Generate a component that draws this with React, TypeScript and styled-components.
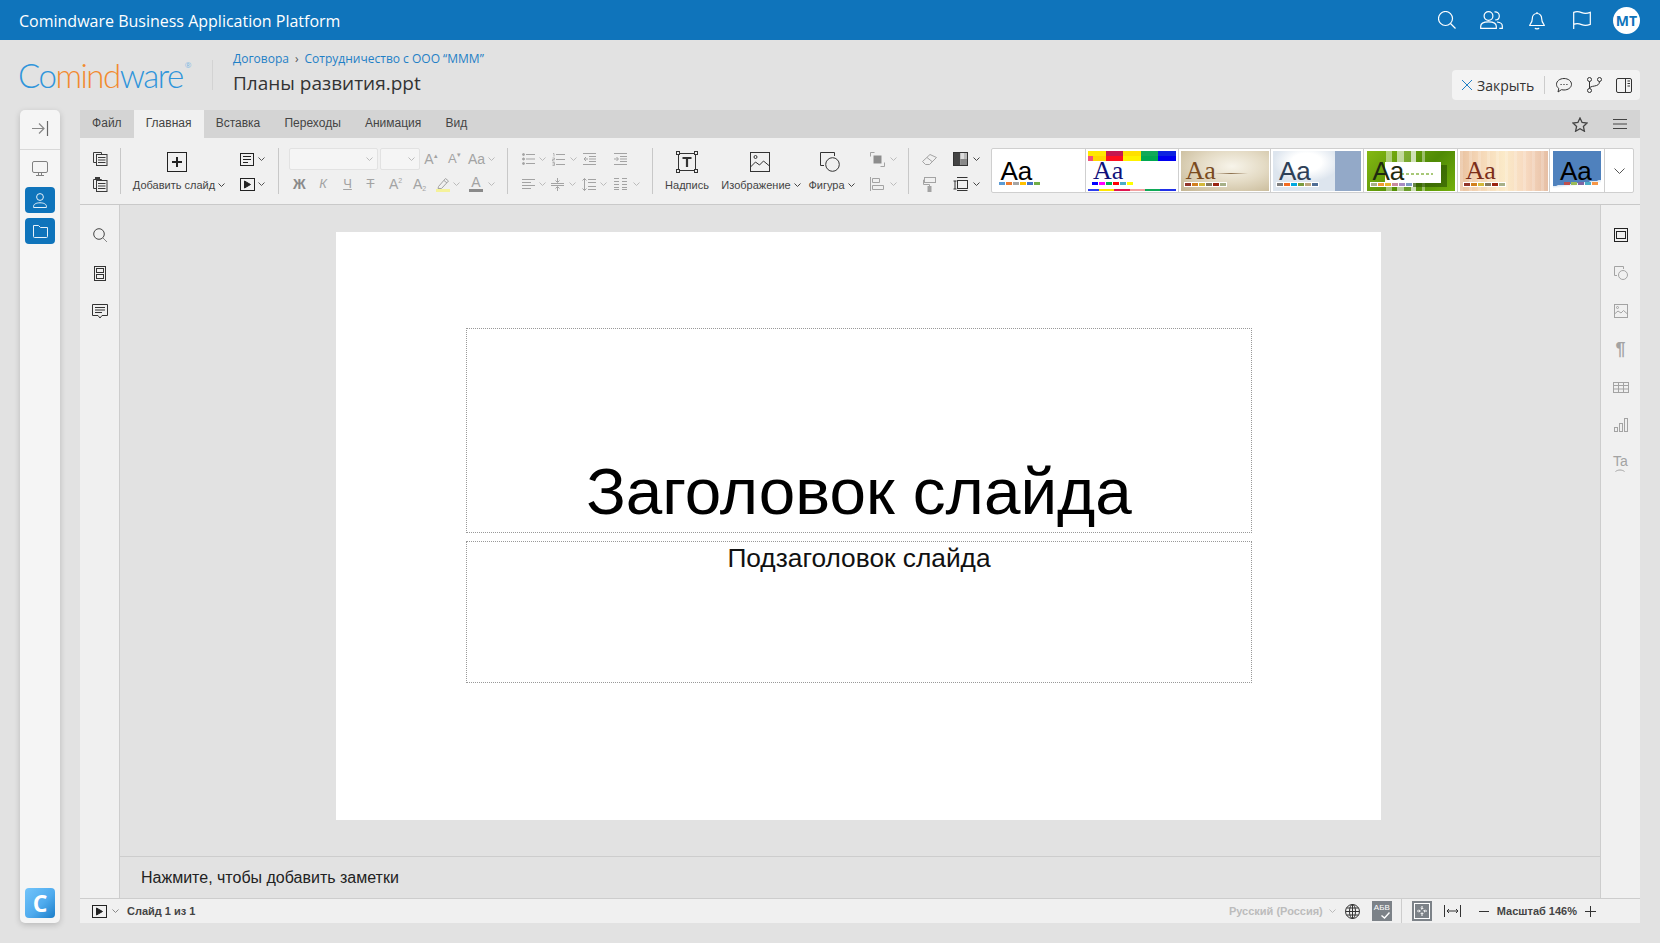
import React from "react";
import styled, {createGlobalStyle} from "styled-components";

const GlobalStyle = createGlobalStyle`
    html, body {margin: 0; background: #e2e2e2; overflow: hidden;}
    * {box-sizing: border-box;}
`;

const Svg = styled.svg<{$c?: string}>`
    display: block;
    flex: none;
    fill: none;
    stroke: ${(p) => p.$c || "#333"};
    stroke-width: 1;
`;

const Ico: React.FC<{w: number; h: number; c?: string; children: React.ReactNode}> = ({w, h, c, children}) => (
    <Svg width={w} height={h} viewBox={`0 0 ${w} ${h}`} $c={c}>
        {children}
    </Svg>
);

const GRAY = "#a3a3a3";
const DARK = "#3a3a3a";

const Chev = ({c = "#888"}: {c?: string}) => (
    <Ico w={7} h={4} c={c}>
        <path d="M.5.5l3 3 3-3" />
    </Ico>
);

const Lines = ({x, ys, w}: {x: number; ys: number[]; w: number}) => (
    <path d={ys.map((y) => `M${x} ${y}h${w}`).join("")} />
);

const CopyIcon = () => (
    <Ico w={15} h={14} c={DARK}>
        <path d="M3.5 10.5h-3v-10h8v2" />
        <rect x="3.5" y="2.5" width="10.5" height="11" />
        <Lines x={5} ys={[5.5, 8, 10.5]} w={7.5} />
    </Ico>
);

const PasteIcon = () => (
    <Ico w={15} h={15} c={DARK}>
        <path d="M3.5 11.5h-3v-9h8v1.5" />
        <rect x="2.5" y="0.5" width="4" height="2" fill={DARK} />
        <rect x="3.5" y="3.5" width="10.5" height="11" />
        <Lines x={5} ys={[6.5, 9, 11.5]} w={7.5} />
    </Ico>
);

const AddBox = () => (
    <Ico w={20} h={20} c="#222">
        <rect x=".5" y=".5" width="19" height="19" />
        <path d="M10 5v10M5 10h10" strokeWidth="2" />
    </Ico>
);

const LayoutIcon = () => (
    <Ico w={14} h={13} c="#222">
        <rect x=".5" y=".5" width="13" height="12" />
        <path d="M3 3.5h8M3 6.5h8M3 9.5h5" />
    </Ico>
);

const PlayIcon = () => (
    <Ico w={15} h={13} c="#222">
        <rect x=".5" y=".5" width="14" height="12" />
        <path d="M4.5 3l6 3.5-6 3.5z" fill="#222" />
    </Ico>
);

const BulletList = () => (
    <Ico w={13} h={12} c={GRAY}>
        <circle cx="1.5" cy="1.5" r="1" fill={GRAY} />
        <circle cx="1.5" cy="6" r="1" fill={GRAY} />
        <circle cx="1.5" cy="10.5" r="1" fill={GRAY} />
        <Lines x={4} ys={[1.5, 6, 10.5]} w={9} />
    </Ico>
);

const NumList = () => (
    <Ico w={13} h={13} c={GRAY}>
        <path d="M1 .5h1v3M.5 5h2v1.5H.5V8h2M.5 9.5h2v3H.5M.5 11h2" strokeWidth=".8" />
        <Lines x={4} ys={[1.5, 6.5, 11.5]} w={9} />
    </Ico>
);

const Outdent = () => (
    <Ico w={13} h={12} c={GRAY}>
        <Lines x={0} ys={[.5, 11.5]} w={13} />
        <Lines x={6} ys={[3.5, 8.5]} w={7} />
        <path d="M5 6H1M3 4L1 6l2 2M6 6h7" />
    </Ico>
);

const Indent = () => (
    <Ico w={13} h={12} c={GRAY}>
        <Lines x={0} ys={[.5, 11.5]} w={13} />
        <Lines x={6} ys={[3.5, 8.5]} w={7} />
        <path d="M0 6h4M2.5 4L4.5 6l-2 2M6 6h7" />
    </Ico>
);

const AlignLeft = () => (
    <Ico w={13} h={11} c={GRAY}>
        <path d="M0 .5h13M0 3.5h9M0 6.5h13M0 9.5h9" />
    </Ico>
);

const VAlign = () => (
    <Ico w={13} h={13} c={GRAY}>
        <path d="M0 5.5h13M0 7.5h13M6.5 0v4M4.5 2.5l2 2 2-2M6.5 13V9M4.5 10.5l2-2 2 2" />
    </Ico>
);

const LineSpacing = () => (
    <Ico w={14} h={13} c={GRAY}>
        <path d="M2.5 .5v12M.5 2.5l2-2 2 2M.5 10.5l2 2 2-2M6 1.5h8M6 4.5h8M6 8.5h8M6 11.5h8" />
    </Ico>
);

const Columns = () => (
    <Ico w={13} h={12} c={GRAY}>
        <path d="M0 .5h5M0 3.5h5M0 6.5h5M0 9.5h5M0 11.5h5M8 .5h5M8 3.5h5M8 6.5h5M8 9.5h5M8 11.5h5" />
    </Ico>
);

const PenIcon = () => (
    <Ico w={14} h={15} c={GRAY}>
        <path d="M2.5 9.5l7-8 3 2.5-7 7.5-3.5 0z" />
        <path d="M8 3.5l3 2.5" />
        <rect x="0" y="12" width="14" height="3" fill="#f5f29a" stroke="none" />
    </Ico>
);

const TextBoxIcon = () => (
    <Ico w={22} h={22} c="#333">
        <path d="M2.5 2.5h17v17h-17z" />
        <g fill="#f0f0f0">
            <rect x=".5" y=".5" width="3" height="3" />
            <rect x="18.5" y=".5" width="3" height="3" />
            <rect x=".5" y="18.5" width="3" height="3" />
            <rect x="18.5" y="18.5" width="3" height="3" />
        </g>
        <path d="M6.5 7h9M11 7v9" strokeWidth="2.2" />
    </Ico>
);

const ImageIcon = () => (
    <Ico w={20} h={20}>
        <rect x=".5" y=".5" width="19" height="19" />
        <circle cx="5.5" cy="5" r="1.5" />
        <path d="M.5 15l5-5 4 3 4-4 6 5" />
    </Ico>
);

const ShapeIcon = () => (
    <Ico w={20} h={20}>
        <path d="M4 13.5H.5V.5h14V4" />
        <circle cx="12.5" cy="12.5" r="6.8" />
    </Ico>
);

const ArrangeIcon = () => (
    <Ico w={15} h={15} c={GRAY}>
        <path d="M4.5 .5H.5v4M10.5 14.5h4v-4" />
        <rect x="4" y="4" width="7" height="7" fill="#8d8d8d" stroke="#8d8d8d" />
    </Ico>
);

const AlignObjects = () => (
    <Ico w={15} h={14} c={GRAY}>
        <path d="M.5 0v14M2.5 1.5h7v4h-7zM2.5 8.5h11v4h-11z" />
    </Ico>
);

const EraserIcon = () => (
    <Ico w={15} h={13} c={GRAY}>
        <path d="M.5 8.5L8 1.5l6.5 3-7 7H3.5z" />
        <path d="M5 4.5l5 4" />
    </Ico>
);

const PaletteIcon = () => (
    <Ico w={15} h={14}>
        <rect x=".5" y=".5" width="14" height="13" fill="#fff" stroke="#333" />
        <rect x="1" y="1" width="6.5" height="12" fill="#444" stroke="none" />
        <rect x="7.5" y="1" width="3.5" height="6" fill="#ddd" stroke="none" />
        <rect x="11" y="1" width="3" height="6" fill="#bbb" stroke="none" />
        <rect x="7.5" y="7" width="6.5" height="6" fill="#888" stroke="none" />
    </Ico>
);

const RollerIcon = () => (
    <Ico w={13} h={15} c={GRAY}>
        <rect x="1.5" y=".5" width="11" height="5" />
        <path d="M1.5 3H.5v4.5h6V10" />
        <rect x="5" y="9.5" width="3" height="5.5" fill={GRAY} />
    </Ico>
);

const SizeIcon = () => (
    <Ico w={15} h={14}>
        <path d="M4 .5h10.5M4 13.5h10.5M.5 4h3M.5 12h3M2 4v8" />
        <rect x="4.5" y="3.5" width="10" height="8" />
    </Ico>
);

const TopSearch = () => (
    <Ico w={18} h={18} c="#fff">
        <circle cx="7.5" cy="7.5" r="7" strokeWidth="1.2" />
        <path d="M12.5 12.5l5 5" strokeWidth="1.2" />
    </Ico>
);

const TopUsers = () => (
    <Ico w={23} h={18} c="#fff">
        <circle cx="8.5" cy="5" r="4.4" strokeWidth="1.2" />
        <path d="M.7 17.4v-2.2c0-3 3-4.4 7.8-4.4s7.8 1.4 7.8 4.4v2.2z" strokeWidth="1.2" />
        <path d="M14.5.9c3-.3 4.8 1.6 4.8 4s-1.8 4-4 4M17 11c3 .3 5.3 1.6 5.3 4v2.4h-3" strokeWidth="1.2" />
    </Ico>
);

const TopBell = () => (
    <Ico w={16} h={19} c="#fff">
        <path d="M8 1v1.5M8 2.500c-3.2 0-4.7 2.3-4.700 5.200 0 4.300-2.600 5.300-2.600 6.800h14.600c0-1.500-2.600-2.500-2.600-6.800 0-2.900-1.500-5.200-4.700-5.200z" strokeWidth="1.2" />
        <path d="M6 17c.4 1.2 3.600 1.2 4 0" strokeWidth="1.2" />
    </Ico>
);

const TopFlag = () => (
    <Ico w={18} h={18} c="#fff">
        <path d="M.7 18V1.400c3-1.400 5-1 8 .2s5 1 8.600-.2v12c-3.600 1.200-5.600 1.400-8.600.2s-5-1.600-8-.2" strokeWidth="1.2" />
    </Ico>
);

const CommentBubble = () => (
    <Ico w={16} h={15}>
        <path d="M8 .5c4.200 0 7.500 2.600 7.500 5.800S12.200 12 8 12c-.9 0-1.800-.1-2.600-.3L2 14l.8-3.500C1.300 9.400.5 8 .5 6.300.5 3.100 3.800.5 8 .5z" />
        <path d="M4.500 6.500h1.200M7.400 6.500h1.200M10.300 6.500h1.200" />
    </Ico>
);

const BranchIcon = () => (
    <Ico w={15} h={16}>
        <circle cx="2.5" cy="2.5" r="2" />
        <circle cx="2.5" cy="13.5" r="2" />
        <circle cx="12.5" cy="2.5" r="2" />
        <path d="M2.500 4.500v7M12.500 4.500c0 3-2 4-5 4.500s-5 1-5 2.500" />
    </Ico>
);

const PanelIcon = () => (
    <Ico w={16} h={15}>
        <rect x=".5" y=".5" width="15" height="14" rx="1.5" />
        <path d="M9.500.5v14M11.500 3H14M11.500 5.500H14M11.500 8H14" />
    </Ico>
);

const StarIcon = () => (
    <Ico w={16} h={15} c="#444">
        <path d="M8 1l2.100 4.500 4.900.6-3.600 3.300 1 4.800L8 11.800l-4.400 2.400 1-4.800L1 6.100l4.900-.6z" strokeWidth="1.3" />
    </Ico>
);

const BurgerIcon = () => (
    <Ico w={14} h={10} c="#444">
        <path d="M0 .5h14M0 5h14M0 9.500h14" />
    </Ico>
);

const CollapseIcon = () => (
    <Ico w={17} h={15} c="#666">
        <path d="M0 7.500h12M7 2.500l5 5-5 5" stroke="#888" strokeWidth="1.2" />
        <path d="M15.500 0v15" strokeWidth="1.2" />
    </Ico>
);

const MonitorIcon = () => (
    <Ico w={16} h={15} c="#808080">
        <rect x=".5" y=".5" width="15" height="11" rx="1.5" />
        <path d="M6.500 11.500v3M9.500 11.500v3M4 14.500h8" />
    </Ico>
);

const UserIcon = () => (
    <Ico w={14} h={15} c="#e8f2fa">
        <circle cx="7" cy="4" r="3.4" />
        <path d="M.6 14.500v-1.300c0-2 2.600-3.400 6.400-3.400s6.400 1.400 6.400 3.400v1.300z" />
    </Ico>
);

const FolderIcon = () => (
    <Ico w={15} h={13} c="#e8f2fa">
        <path d="M.5 11.500V.5h5l2 2h7v9a1 1 0 0 1-1 1h-12a1 1 0 0 1-1-1z" />
    </Ico>
);

const SearchIcon = () => (
    <Ico w={14} h={14} c="#444">
        <circle cx="6" cy="6" r="5.3" />
        <path d="M10 10l4 4" stroke="#888" />
    </Ico>
);

const SlidesIcon = () => (
    <Ico w={12} h={15}>
        <rect x=".5" y=".5" width="11" height="14" />
        <rect x="2.5" y="2.5" width="7" height="4" />
        <rect x="2.5" y="8.5" width="7" height="4" />
    </Ico>
);

const NotesIcon = () => (
    <Ico w={16} h={15}>
        <path d="M.5.5h15v11H10L8 14l-2-2.500H.5z" />
        <path d="M3 3.500h10M3 6h10M3 8.500h7" />
    </Ico>
);

const FrameIcon = () => (
    <Ico w={14} h={14} c="#222">
        <rect x=".5" y=".5" width="13" height="13" />
        <rect x="2.5" y="3.5" width="9" height="7" />
    </Ico>
);

const ShapeSmall = () => (
    <Ico w={14} h={14} c={GRAY}>
        <path d="M3 9.500H.5V.5h9V3" />
        <circle cx="9" cy="9" r="4.5" />
    </Ico>
);

const ImageSmall = () => (
    <Ico w={14} h={14} c={GRAY}>
        <rect x=".5" y=".5" width="13" height="13" />
        <circle cx="3.5" cy="3.5" r="1" />
        <path d="M.5 10L4 7l3 2 2.500-2.500 4 3.500" />
    </Ico>
);

const TableIcon = () => (
    <Ico w={16} h={11} c={GRAY}>
        <rect x=".5" y=".5" width="15" height="10" />
        <path d="M.5 3.500h15M.5 7h15M5.500.5v10M10.500.5v10" />
    </Ico>
);

const ChartIcon = () => (
    <Ico w={14} h={14} c={GRAY}>
        <rect x=".5" y="9.5" width="3" height="4" />
        <rect x="5.5" y="5.5" width="3" height="8" />
        <rect x="10.5" y=".5" width="3" height="13" />
    </Ico>
);

const GlobeIcon = () => (
    <Ico w={15} h={15}>
        <circle cx="7.5" cy="7.5" r="7" />
        <ellipse cx="7.5" cy="7.5" rx="3" ry="7" />
        <path d="M7.500.5v14M1.500 4h12M.5 7.500h14M1.500 11h12" />
    </Ico>
);

const SpellCheck = () => (
    <Ico w={9} h={7} c="#fff">
        <path d="M.5 3.500l3 2.500 5-5.500" strokeWidth="1.4" />
    </Ico>
);

const FitIcon = () => (
    <Ico w={16} h={16} c="#fff">
        <rect x=".5" y=".5" width="15" height="15" />
        <path d="M8 3v3M6.700 5L8 6.300 9.300 5M8 13v-3M6.700 11L8 9.700 9.300 11M3 8h3M5 6.700L6.300 8 5 9.300M13 8h-3M11 6.700L9.700 8l1.300 1.300" />
    </Ico>
);

const WidthIcon = () => (
    <Ico w={17} h={12}>
        <path d="M.5 0v12M16.500 0v12M3 6h11M5 4L3 6l2 2M12 4l2 2-2 2" />
    </Ico>
);

const MinusIcon = () => (
    <Ico w={10} h={3}>
        <path d="M0 1.500h10" />
    </Ico>
);

const PlusIcon = () => (
    <Ico w={11} h={11}>
        <path d="M0 5.500h11M5.500 0v11" />
    </Ico>
);

const Page = styled.div`
    width: 1660px;
    height: 943px;
    display: flex;
    flex-direction: column;
    background: #e2e2e2;
    font-family: "Liberation Sans", Arial, sans-serif;
`;

const TopBar = styled.header`
    height: 40px;
    flex: none;
    display: flex;
    align-items: center;
    padding: 2px 20px 0 19px;
    background: #0f74bb;
    color: #fff;
    font: 16px "Open Sans", sans-serif;
`;

const TopIcons = styled.div`
    margin: -2px 0 0 auto;
    display: flex;
    align-items: center;
`;

const TopSlot = styled.div<{$ml: number}>`
    margin-left: ${(p) => p.$ml}px;
`;

const Avatar = styled.div`
    width: 27px;
    height: 27px;
    margin-left: 22px;
    border-radius: 50%;
    background: #fff;
    color: #0f74bb;
    font: 700 14px/27px "Open Sans", sans-serif;
    text-align: center;
`;

const Header = styled.div`
    height: 70px;
    flex: none;
    display: flex;
    padding: 20px 20px 0 19px;
`;

const Logo = styled.div`
    width: 172px;
    height: 30px;
    margin-left: -1px;
    display: flex;
    align-items: center;
    font: 300 33px/30px "Lato", sans-serif;
    letter-spacing: -1.5px;
    color: #2f95db;
`;

const LogoMid = styled.span`
    color: #f28a2e;
`;

const LogoMark = styled.sup`
    font: 8px/8px "Open Sans", sans-serif;
    letter-spacing: 0;
    color: #7fb9e2;
    align-self: flex-start;
    margin: 1px 0 0 2px;
`;

const HeadDivider = styled.div`
    width: 1px;
    height: 30px;
    margin: 0 20px 0 22px;
    background: #d3d3d3;
`;

const HeadText = styled.div`
    display: flex;
    flex-direction: column;
    margin-top: -11px;
`;

const Crumbs = styled.div`
    display: flex;
    align-items: center;
    height: 18px;
    font: 12px "Open Sans", sans-serif;
    color: #1f80c6;
`;

const CrumbSep = styled.span`
    margin: 0 6px;
    color: #555;
`;

const DocTitle = styled.div`
    margin-top: 3px;
    font: 19px/26px "Open Sans", sans-serif;
    color: #333;
`;

const CloseBar = styled.div`
    margin: 10px 0 0 auto;
    width: 188px;
    height: 30px;
    display: flex;
    align-items: center;
    padding-left: 10px;
    background: #f3f3f3;
    border-radius: 4px;
`;

const CloseLabel = styled.span`
    margin-left: 5px;
    font: 14px "Open Sans", sans-serif;
    color: #333;
`;

const BarDivider = styled.div`
    width: 1px;
    height: 18px;
    margin: 0 11px 0 10px;
    background: #ccc;
`;

const Body = styled.div`
    flex: 1;
    display: flex;
    gap: 20px;
    padding: 0 20px 20px;
    min-height: 0;
`;

const Sidebar = styled.nav`
    width: 40px;
    flex: none;
    display: flex;
    flex-direction: column;
    align-items: center;
    background: #f5f5f5;
    border-radius: 5px;
    box-shadow: 0 2px 6px rgba(0, 0, 0, 0.18);
`;

const SideTop = styled.div`
    width: 100%;
    height: 40px;
    flex: none;
    display: flex;
    align-items: center;
    justify-content: center;
    padding-bottom: 2px;
    margin-bottom: 5px;
    border-bottom: 1px solid #d8d8d8;
`;

const SideItem = styled.div<{$active?: boolean; $mb: number}>`
    width: 30px;
    height: 26px;
    flex: none;
    display: flex;
    align-items: center;
    justify-content: center;
    margin-bottom: ${(p) => p.$mb}px;
    border-radius: 4px;
    background: ${(p) => (p.$active ? "#0f74bb" : "transparent")};
`;

const SideLogo = styled.div`
    margin: auto 0 5px;
    width: 30px;
    height: 30px;
    border-radius: 4px;
    background: linear-gradient(135deg, #72c4fa 0%, #4fabee 55%, #1b7dc8 100%);
    color: #fff;
    font: 700 23px/30px "Open Sans", sans-serif;
    text-align: center;
`;

const Main = styled.main`
    flex: 1;
    min-width: 0;
    display: flex;
    flex-direction: column;
`;

const Tabs = styled.div`
    height: 28px;
    flex: none;
    display: flex;
    align-items: center;
    padding-right: 13px;
    background: #d4d4d4;
`;

const Tab = styled.div<{$active?: boolean}>`
    height: 28px;
    padding: 0 12.1px;
    font-size: 12px;
    line-height: 26px;
    color: #444;
    background: ${(p) => (p.$active ? "#f0f0f0" : "transparent")};
`;

const TabTools = styled.div`
    margin-left: auto;
    display: flex;
    align-items: center;
    gap: 25px;
`;

const Ribbon = styled.div`
    height: 67px;
    flex: none;
    display: flex;
    align-items: flex-start;
    padding-top: 10px;
    background: #f0f0f0;
    border-bottom: 1px solid #c9c9c9;
`;

const Sep = styled.div`
    width: 1px;
    height: 46px;
    flex: none;
    background: #c8c8c8;
`;

const Group = styled.div<{$w: number}>`
    width: ${(p) => p.$w}px;
    flex: none;
    display: flex;
`;

const Rows = styled.div<{$w?: number}>`
    display: grid;
    grid-template-rows: 22px 28px;
    ${(p) => p.$w && `width: ${p.$w}px;`}
    flex: none;
`;

const Row = styled.div`
    display: flex;
    align-items: center;
`;

const Cell = styled.div<{$ml?: number}>`
    margin-left: ${(p) => p.$ml ?? 0}px;
    flex: none;
`;

const Big = styled.div<{$w: number}>`
    width: ${(p) => p.$w}px;
    flex: none;
    display: flex;
    flex-direction: column;
    align-items: center;
    padding-top: 2px;
`;

const BigIconBox = styled.div`
    height: 23px;
    display: flex;
    align-items: center;
`;

const BigLabel = styled.div<{$shift?: number}>`
    display: flex;
    align-items: center;
    gap: 3px;
    margin-top: 5px;
    margin-left: ${(p) => p.$shift ?? 0}px;
    font-size: 11px;
    line-height: 14px;
    color: #444;
    white-space: nowrap;
`;

const FieldBox = styled.div<{$w: number; $ml?: number}>`
    width: ${(p) => p.$w}px;
    height: 22px;
    margin-left: ${(p) => p.$ml ?? 0}px;
    flex: none;
    display: flex;
    align-items: center;
    justify-content: flex-end;
    padding-right: 4px;
    background: #f5f5f5;
    border: 1px solid #e2e2e2;
    border-radius: 2px;
`;

const Glyph = styled.span<{$w: number; $ml?: number; $bold?: boolean; $italic?: boolean; $line?: string; $size?: number}>`
    width: ${(p) => p.$w}px;
    margin-left: ${(p) => p.$ml ?? 0}px;
    flex: none;
    font-size: ${(p) => p.$size ?? 14}px;
    line-height: 16px;
    font-weight: ${(p) => (p.$bold ? 700 : 400)};
    font-style: ${(p) => (p.$italic ? "italic" : "normal")};
    text-decoration: ${(p) => p.$line || "none"};
    color: ${(p) => (p.$bold ? "#8a8a8a" : GRAY)};
    text-align: center;
    white-space: nowrap;
`;

const Mini = styled.sup`
    font-size: 7px;
    line-height: 0;
    vertical-align: 6px;
`;

const MiniLow = styled.sub`
    font-size: 7px;
    line-height: 0;
    vertical-align: -2px;
`;

const ColorA = styled.span`
    display: block;
    width: 14px;
    flex: none;
    font-size: 14px;
    line-height: 13px;
    color: ${GRAY};
    text-align: center;
    border-bottom: 3px solid #8a8a8a;
`;

const Gallery = styled.div`
    width: 643px;
    height: 45px;
    flex: none;
    display: flex;
    background: #fff;
    border: 1px solid #cfcfcf;
    border-radius: 2px;
`;

const ThemeItem = styled.div<{$w: number}>`
    width: ${(p) => p.$w}px;
    flex: none;
    padding: 2px 2px 0;
    display: flex;
    justify-content: center;
    border-right: 1px solid #cfcfcf;
`;

const Thumb = styled.div<{$bg: string; $w: number}>`
    width: ${(p) => p.$w}px;
    height: 40px;
    flex: none;
    display: flex;
    flex-direction: column;
    overflow: hidden;
    background: ${(p) => p.$bg};
`;

const ThumbAa = styled.div<{$serif?: boolean; $c: string; $x: number; $y: number}>`
    margin: ${(p) => p.$y}px 0 0 ${(p) => p.$x}px;
    font-family: ${(p) => (p.$serif ? '"Liberation Serif", serif' : '"Liberation Sans", sans-serif')};
    font-size: 26px;
    line-height: 22px;
    color: ${(p) => p.$c};
`;

const ThumbSwatches = styled.div<{$x: number; $framed?: boolean}>`
    display: flex;
    align-self: flex-start;
    gap: 1px;
    margin: 0 0 0 ${(p) => p.$x}px;
    padding: ${(p) => (p.$framed ? "1px" : "0")};
    background: ${(p) => (p.$framed ? "#fff" : "transparent")};
`;

const Swatch = styled.i<{$c: string}>`
    width: 6px;
    height: 3px;
    background: ${(p) => p.$c};
`;

const GalleryMore = styled.div`
    flex: 1;
    display: flex;
    align-items: center;
    justify-content: center;
`;

const Workspace = styled.div`
    flex: 1;
    min-height: 0;
    display: flex;
`;

const ToolCol = styled.div<{$right?: boolean}>`
    width: 40px;
    flex: none;
    display: flex;
    flex-direction: column;
    align-items: center;
    padding-top: 11px;
    background: #f0f0f0;
    ${(p) => (p.$right ? "border-left: 1px solid #cdcdcd;" : "border-right: 1px solid #cdcdcd;")}
`;

const ToolSlot = styled.div`
    height: 38px;
    flex: none;
    display: flex;
    align-items: center;
    justify-content: center;
`;

const ToolText = styled.span<{$size: number; $bold?: boolean}>`
    font-size: ${(p) => p.$size}px;
    font-weight: ${(p) => (p.$bold ? 700 : 400)};
    line-height: 1;
    color: ${GRAY};
`;

const TaWrap = styled.div`
    display: flex;
    flex-direction: column;
    align-items: center;
    gap: 1px;
`;

const Center = styled.div`
    flex: 1;
    min-width: 0;
    display: flex;
    flex-direction: column;
`;

const Canvas = styled.div`
    flex: 1;
    min-height: 0;
    display: flex;
    justify-content: center;
    padding: 27px 3px 0 0;
`;

const Slide = styled.div`
    width: 1045px;
    height: 588px;
    display: flex;
    flex-direction: column;
    gap: 8px;
    padding: 96px 129px 0 130px;
    background: #fff;
`;

const TitleHolder = styled.div`
    height: 205px;
    flex: none;
    display: flex;
    align-items: flex-end;
    justify-content: center;
    padding-bottom: 2px;
    border: 1px dotted #999;
    font-size: 65.6px;
    line-height: 76px;
    color: #000;
`;

const SubHolder = styled.div`
    height: 142px;
    flex: none;
    border: 1px dotted #999;
    font-size: 26.3px;
    line-height: 32px;
    text-align: center;
    color: #111;
`;

const Notes = styled.div`
    height: 42px;
    flex: none;
    display: flex;
    align-items: center;
    padding-left: 21px;
    border-top: 1px solid #cdcdcd;
    font-size: 16px;
    color: #222;
`;

const StatusBar = styled.footer`
    height: 25px;
    flex: none;
    display: flex;
    align-items: center;
    padding: 0 44px 0 12px;
    background: #f0f0f0;
    border-top: 1px solid #cdcdcd;
    font-size: 11px;
    font-weight: 700;
    color: #444;
`;

const StatusGroup = styled.div`
    margin-left: auto;
    display: flex;
    align-items: center;
`;

const StatusLang = styled.span`
    color: #bcbcbc;
`;

const StatusCell = styled.div<{$ml: number}>`
    margin-left: ${(p) => p.$ml}px;
    flex: none;
`;

const StatusBox = styled.div<{$ml: number}>`
    width: 20px;
    height: 20px;
    margin-left: ${(p) => p.$ml}px;
    flex: none;
    display: flex;
    flex-direction: column;
    align-items: center;
    justify-content: center;
    background: #7c8288;
`;

const SpellText = styled.span`
    font-size: 8px;
    font-weight: 400;
    line-height: 8px;
    color: #fff;
`;

const SpellMark = styled.div`
    align-self: flex-end;
    margin-right: 2px;
`;

const StatusDivider = styled.div`
    width: 1px;
    height: 24px;
    margin: 0 10px 0 9px;
    background: #cdcdcd;
`;

const office = ["#5b9bd5", "#ed7d31", "#a5a5a5", "#ffc000", "#4472c4", "#70ad47"];

const themes = [
    {w: 94, tw: 88, bg: "#fff", c: "#000", x: 6, y: 9, sx: 4, sw: office},
    {
        w: 93,
        tw: 88,
        bg: `linear-gradient(90deg, #ffe800 0 20%, #c4184f 20% 40%, #ffe000 40% 60%, #10a958 60% 80%, #0d23e0 80%) top/100% 5px no-repeat,
             linear-gradient(90deg, #f0507a 0 6%, #ffd600 6% 20%, #ff0f1f 20% 40%, #fff200 40% 60%, #00a850 60% 80%, #0000f0 80%) 0 5px/100% 5px no-repeat,
             linear-gradient(90deg, #2c3df0 0 12%, #ffe600 12% 30%, #e0154f 30% 48%, #f3a0a0 48% 65%, #10a958 65% 82%, #2030e8 82%) bottom/100% 2px no-repeat,
             #fff`,
        c: "#10107a",
        serif: true,
        x: 5,
        y: 9,
        sx: 4,
        sw: ["#0000ff", "#ff00ff", "#00b050", "#ff0000", "#4bacc6", "#ffff00"],
    },
    {
        w: 92,
        tw: 88,
        bg: `linear-gradient(90deg, transparent, #8c6f4c 50%, transparent) 33px 22px/34px 1px no-repeat,
             radial-gradient(ellipse at 58% 38%, #f7f4ea 0%, #e4dbc5 45%, #c4b592 100%)`,
        c: "#7a4b1e",
        serif: true,
        x: 5,
        y: 9,
        sx: 3,
        framed: true,
        sw: ["#93362b", "#d2801f", "#d3b83a", "#85795f", "#9a2410", "#a7b088"],
    },
    {
        w: 93,
        tw: 88,
        bg: `linear-gradient(90deg, transparent 0 70%, #93a9c8 70%),
             radial-gradient(ellipse 38% 50% at 38% 28%, #fff 45%, #dde5ee 100%)`,
        c: "#2e4057",
        x: 6,
        y: 9,
        sx: 3,
        framed: true,
        sw: ["#7f7f7f", "#f26b21", "#00a8e0", "#7a9b3d", "#bda77e", "#4f6d94"],
    },
    {
        w: 94,
        tw: 88,
        bg: `repeating-linear-gradient(90deg, #a8c878 0 3px, transparent 3px 5px) 34px 22px/32px 2px no-repeat,
             linear-gradient(#fff, #fff) 18px 11px/56px 21px no-repeat,
             linear-gradient(rgba(40, 80, 0, .6), rgba(40, 80, 0, .6)) 22px 14px/58px 22px no-repeat,
             linear-gradient(90deg, transparent 0 22%, rgba(255,255,255,.45) 22% 28%, transparent 28% 34%, rgba(255,255,255,.6) 34% 42%, rgba(255,255,255,.15) 42% 50%, rgba(255,255,255,.7) 50% 56%, transparent 56% 62%, rgba(255,255,255,.4) 62% 66%, transparent 66%),
             linear-gradient(135deg, #84b812, #4f8a05 60%, #74b00c)`,
        c: "#1f2a10",
        x: 6,
        y: 9,
        sx: 3,
        framed: true,
        sw: ["#a7b088", "#ef9c34", "#e4b72e", "#c98ba0", "#a98cc4", "#7f9cc4"],
    },
    {
        w: 92,
        tw: 88,
        bg: `repeating-linear-gradient(90deg, rgba(255,255,255,.18) 0 3px, transparent 3px 9px),
             linear-gradient(90deg, #e9c2a0, #f4d5b5 20%, #fbeac8 50%, #f7d9c0 75%, #e6bfa5)`,
        c: "#7c2e1a",
        serif: true,
        x: 6,
        y: 9,
        sx: 3,
        framed: true,
        sw: ["#93362b", "#d2801f", "#d3b83a", "#85795f", "#9a2410", "#a7b088"],
    },
    {
        w: 55,
        tw: 48,
        bg: "linear-gradient(173deg, #4f81bd 0 76%, #dbe5f1 76.5%, #fff 82%)",
        c: "#000",
        x: 7,
        y: 9,
        sx: 4,
        sw: ["#4f81bd", "#c0504d", "#9bbb59", "#8064a2", "#4bacc6", "#f79646"],
    },
];

const App: React.FC = () => (
    <Page>
        <GlobalStyle />
        <TopBar>
            Comindware Business Application Platform
            <TopIcons>
                <TopSearch />
                <TopSlot $ml={24}><TopUsers /></TopSlot>
                <TopSlot $ml={26}><TopBell /></TopSlot>
                <TopSlot $ml={28}><TopFlag /></TopSlot>
                <Avatar>MT</Avatar>
            </TopIcons>
        </TopBar>
        <Header>
            <Logo>
                Co<LogoMid>mind</LogoMid>ware<LogoMark>®</LogoMark>
            </Logo>
            <HeadDivider />
            <HeadText>
                <Crumbs>
                    Договора<CrumbSep>›</CrumbSep>Сотрудничество с ООО “МММ”
                </Crumbs>
                <DocTitle>Планы развития.ppt</DocTitle>
            </HeadText>
            <CloseBar>
                <Ico w={10} h={10} c="#1f80c6">
                    <path d="M0 0l10 10M10 0L0 10" />
                </Ico>
                <CloseLabel>Закрыть</CloseLabel>
                <BarDivider />
                <CommentBubble />
                <Cell $ml={15}><BranchIcon /></Cell>
                <Cell $ml={14}><PanelIcon /></Cell>
            </CloseBar>
        </Header>
        <Body>
            <Sidebar>
                <SideTop><CollapseIcon /></SideTop>
                <SideItem $mb={6}><MonitorIcon /></SideItem>
                <SideItem $active $mb={5}><UserIcon /></SideItem>
                <SideItem $active $mb={0}><FolderIcon /></SideItem>
                <SideLogo>C</SideLogo>
            </Sidebar>
            <Main>
                <Tabs>
                    <Tab>Файл</Tab>
                    <Tab $active>Главная</Tab>
                    <Tab>Вставка</Tab>
                    <Tab>Переходы</Tab>
                    <Tab>Анимация</Tab>
                    <Tab>Вид</Tab>
                    <TabTools>
                        <StarIcon />
                        <BurgerIcon />
                    </TabTools>
                </Tabs>
                <Ribbon>
                    <Rows $w={40}>
                        <Row><Cell $ml={13}><CopyIcon /></Cell></Row>
                        <Row><Cell $ml={13}><PasteIcon /></Cell></Row>
                    </Rows>
                    <Sep />
                    <Group $w={157}>
                        <Big $w={112}>
                            <BigIconBox><AddBox /></BigIconBox>
                            <BigLabel $shift={4}>Добавить слайд <Chev c="#444" /></BigLabel>
                        </Big>
                        <Rows>
                            <Row><Cell $ml={7}><LayoutIcon /></Cell><Cell $ml={4}><Chev c="#555" /></Cell></Row>
                            <Row><Cell $ml={7}><PlayIcon /></Cell><Cell $ml={3}><Chev c="#555" /></Cell></Row>
                        </Rows>
                    </Group>
                    <Sep />
                    <Group $w={228}>
                        <Rows>
                            <Row>
                                <FieldBox $w={89} $ml={10}><Chev c="#bbb" /></FieldBox>
                                <FieldBox $w={40} $ml={2}><Chev c="#bbb" /></FieldBox>
                                <Glyph $w={14} $ml={4}>A<Mini>▴</Mini></Glyph>
                                <Glyph $w={12} $ml={10} $size={13}>A<Mini>▾</Mini></Glyph>
                                <Glyph $w={14} $ml={8}>Aa</Glyph>
                                <Cell $ml={6}><Chev c="#bbb" /></Cell>
                            </Row>
                            <Row>
                                <Glyph $w={12} $ml={14} $bold>Ж</Glyph>
                                <Glyph $w={10} $ml={13} $italic $size={13}>К</Glyph>
                                <Glyph $w={11} $ml={14} $line="underline" $size={13}>Ч</Glyph>
                                <Glyph $w={9} $ml={13} $line="line-through" $size={13}>Т</Glyph>
                                <Glyph $w={12} $ml={14}>A<Mini>2</Mini></Glyph>
                                <Glyph $w={13} $ml={12}>A<MiniLow>2</MiniLow></Glyph>
                                <Cell $ml={10}><PenIcon /></Cell>
                                <Cell $ml={3}><Chev c="#bbb" /></Cell>
                                <Cell $ml={9}><ColorA>A</ColorA></Cell>
                                <Cell $ml={5}><Chev c="#bbb" /></Cell>
                            </Row>
                        </Rows>
                    </Group>
                    <Sep />
                    <Group $w={144}>
                        <Rows>
                            <Row>
                                <Cell $ml={14}><BulletList /></Cell>
                                <Cell $ml={4}><Chev c="#bbb" /></Cell>
                                <Cell $ml={6}><NumList /></Cell>
                                <Cell $ml={5}><Chev c="#bbb" /></Cell>
                                <Cell $ml={6}><Outdent /></Cell>
                                <Cell $ml={18}><Indent /></Cell>
                            </Row>
                            <Row>
                                <Cell $ml={14}><AlignLeft /></Cell>
                                <Cell $ml={4}><Chev c="#bbb" /></Cell>
                                <Cell $ml={5}><VAlign /></Cell>
                                <Cell $ml={5}><Chev c="#bbb" /></Cell>
                                <Cell $ml={6}><LineSpacing /></Cell>
                                <Cell $ml={4}><Chev c="#bbb" /></Cell>
                                <Cell $ml={7}><Columns /></Cell>
                                <Cell $ml={6}><Chev c="#bbb" /></Cell>
                            </Row>
                        </Rows>
                    </Group>
                    <Sep />
                    <Group $w={255}>
                        <Big $w={68}>
                            <BigIconBox><TextBoxIcon /></BigIconBox>
                            <BigLabel>Надпись</BigLabel>
                        </Big>
                        <Big $w={78}>
                            <BigIconBox><ImageIcon /></BigIconBox>
                            <BigLabel $shift={2}>Изображение<Chev c="#444" /></BigLabel>
                        </Big>
                        <Big $w={62}>
                            <BigIconBox><ShapeIcon /></BigIconBox>
                            <BigLabel $shift={3}>Фигура<Chev c="#444" /></BigLabel>
                        </Big>
                        <Rows>
                            <Row><Cell $ml={9}><ArrangeIcon /></Cell><Cell $ml={5}><Chev c="#bbb" /></Cell></Row>
                            <Row><Cell $ml={9}><AlignObjects /></Cell><Cell $ml={5}><Chev c="#bbb" /></Cell></Row>
                        </Rows>
                    </Group>
                    <Sep />
                    <Group $w={82}>
                        <Rows>
                            <Row><Cell $ml={13}><EraserIcon /></Cell><Cell $ml={16}><PaletteIcon /></Cell><Cell $ml={5}><Chev c="#444" /></Cell></Row>
                            <Row><Cell $ml={14}><RollerIcon /></Cell><Cell $ml={17}><SizeIcon /></Cell><Cell $ml={5}><Chev c="#444" /></Cell></Row>
                        </Rows>
                    </Group>
                    <Gallery>
                        {themes.map((t, i) => (
                            <ThemeItem key={i} $w={t.w}>
                                <Thumb $bg={t.bg} $w={t.tw}>
                                    <ThumbAa $c={t.c} $serif={t.serif} $x={t.x} $y={t.y}>Aa</ThumbAa>
                                    <ThumbSwatches $x={t.sx} $framed={t.framed}>
                                        {t.sw.map((c) => <Swatch key={c} $c={c} />)}
                                    </ThumbSwatches>
                                </Thumb>
                            </ThemeItem>
                        ))}
                        <GalleryMore>
                            <Ico w={11} h={6} c="#555"><path d="M.5.5l5 5 5-5" /></Ico>
                        </GalleryMore>
                    </Gallery>
                </Ribbon>
                <Workspace>
                    <ToolCol>
                        <ToolSlot><SearchIcon /></ToolSlot>
                        <ToolSlot><SlidesIcon /></ToolSlot>
                        <ToolSlot><NotesIcon /></ToolSlot>
                    </ToolCol>
                    <Center>
                        <Canvas>
                            <Slide>
                                <TitleHolder>Заголовок слайда</TitleHolder>
                                <SubHolder>Подзаголовок слайда</SubHolder>
                            </Slide>
                        </Canvas>
                        <Notes>Нажмите, чтобы добавить заметки</Notes>
                    </Center>
                    <ToolCol $right>
                        <ToolSlot><FrameIcon /></ToolSlot>
                        <ToolSlot><ShapeSmall /></ToolSlot>
                        <ToolSlot><ImageSmall /></ToolSlot>
                        <ToolSlot><ToolText $size={18} $bold>¶</ToolText></ToolSlot>
                        <ToolSlot><TableIcon /></ToolSlot>
                        <ToolSlot><ChartIcon /></ToolSlot>
                        <ToolSlot>
                            <TaWrap>
                                <ToolText $size={14}>Ta</ToolText>
                                <Ico w={10} h={3} c={GRAY}><path d="M.5 2.500C3 .5 7 .5 9.500 2.500" /></Ico>
                            </TaWrap>
                        </ToolSlot>
                    </ToolCol>
                </Workspace>
                <StatusBar>
                    <PlayIcon />
                    <Cell $ml={5}><Chev /></Cell>
                    <Cell $ml={8}>Слайд 1 из 1</Cell>
                    <StatusGroup>
                        <StatusLang>Русский (Россия)</StatusLang>
                        <StatusCell $ml={6}><Chev c="#bbb" /></StatusCell>
                        <StatusCell $ml={9}><GlobeIcon /></StatusCell>
                        <StatusBox $ml={12}>
                            <SpellText>АБВ</SpellText>
                            <SpellMark><SpellCheck /></SpellMark>
                        </StatusBox>
                        <StatusDivider />
                        <StatusBox $ml={0}><FitIcon /></StatusBox>
                        <StatusCell $ml={12}><WidthIcon /></StatusCell>
                        <StatusCell $ml={18}><MinusIcon /></StatusCell>
                        <StatusCell $ml={8}>Масштаб 146%</StatusCell>
                        <StatusCell $ml={8}><PlusIcon /></StatusCell>
                    </StatusGroup>
                </StatusBar>
            </Main>
        </Body>
    </Page>
);

export default App;
